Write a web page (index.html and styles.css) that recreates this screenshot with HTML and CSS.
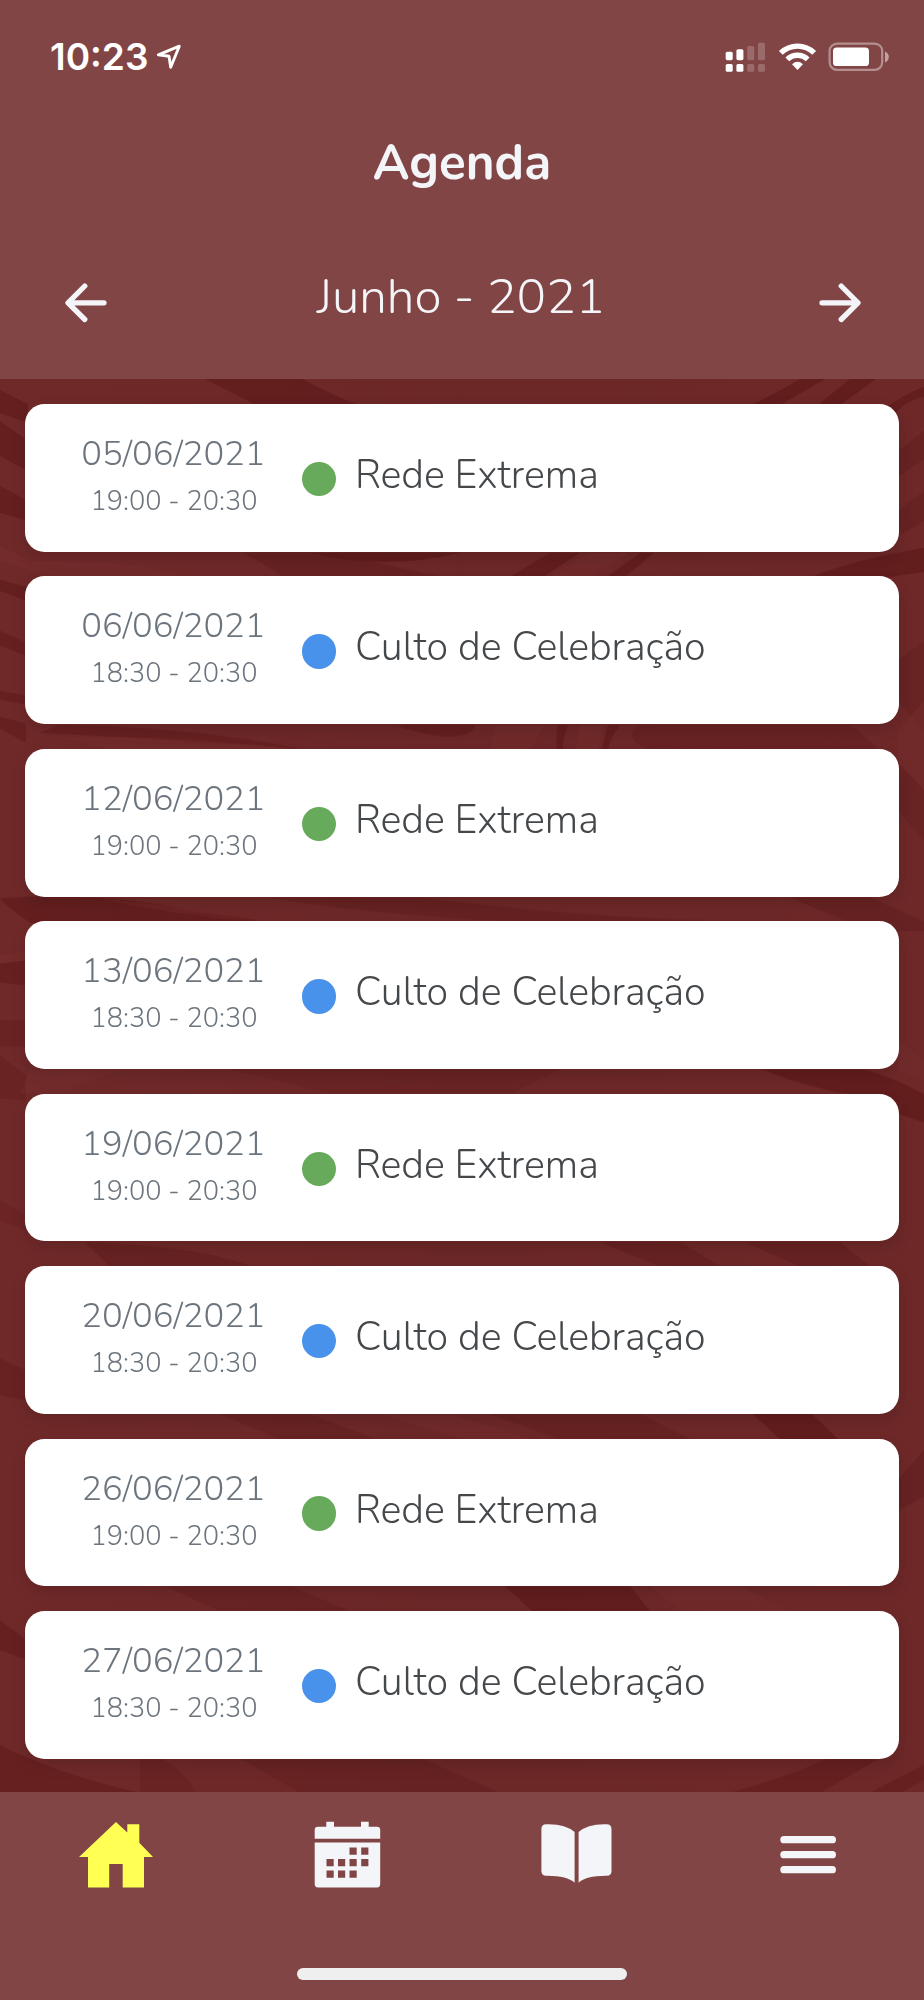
FILE: index.html
```html
<!DOCTYPE html>
<html lang="pt-BR">
<head>
<meta charset="utf-8">
<title>Agenda</title>
<link rel="stylesheet" href="styles.css">
</head>
<body>
<div class="app">
  <header class="header">
    <div class="status">
      <span class="clock">10:23</span>
      <svg class="location" width="28" height="28" viewBox="155 43 28 28"><path d="M158.300 54.800L179.300 46.200L170.700 67.200L169 56.300Z" fill="none" stroke="#fff" stroke-width="2.900" stroke-linejoin="round"/></svg>
      <svg class="indicators" width="166" height="32" viewBox="724 41 166 32">
        <g fill="#fff">
          <rect x="725.700" y="51.700" width="7" height="8.500" rx="1.600"/><rect x="736.400" y="49.200" width="7" height="11" rx="1.600"/>
          <rect x="725.700" y="64" width="7" height="7.800" rx="1.600"/><rect x="736.400" y="64" width="7" height="7.800" rx="1.600"/>
        </g>
        <g fill="#fff" opacity=".2">
          <rect x="747.200" y="46" width="7" height="14.200" rx="1.600"/><rect x="758" y="42.700" width="7" height="17.500" rx="1.600"/>
          <rect x="747.200" y="64" width="7" height="7.800" rx="1.600"/><rect x="758" y="64" width="7" height="7.800" rx="1.600"/>
        </g>
        <g fill="none" stroke="#fff" stroke-width="5.400">
          <path d="M780.800 52.900A24 24 0 0 1 814.200 52.900"/>
          <path d="M787.300 59.400A14.600 14.600 0 0 1 807.700 59.400"/>
        </g>
        <path d="M792 64.300Q797.500 59.400 803 64.300L797.500 70Z" fill="#fff"/>
        <rect x="829.600" y="43.600" width="52.600" height="26.200" rx="7.500" fill="none" stroke="#fff" stroke-opacity=".4" stroke-width="2.200"/>
        <rect x="833" y="47.600" width="36" height="18.400" rx="3.600" fill="#fff"/>
        <path d="M885 51.600Q888.800 53.200 888.800 57T885 62.400Z" fill="#fff" fill-opacity=".5"/>
      </svg>
    </div>
    <h1 class="title">Agenda</h1>
    <div class="month">
      <svg class="arrow" width="46" height="44" viewBox="63 281 46 44"><path d="M104 302.800H68.500M84.800 286L68 302.800L84.800 319.500"/></svg>
      <span class="month-name">Junho - 2021</span>
      <svg class="arrow" width="46" height="44" viewBox="817 281 46 44"><path d="M822 302.800H857.500M841.200 286L858 302.800L841.200 319.500"/></svg>
    </div>
  </header>

  <main class="list">
    <svg class="swirl" viewBox="0 378 924 1415" preserveAspectRatio="none">
      <defs>
        <linearGradient id="side" x1="0" x2="1"><stop offset="0" stop-color="#702929"/><stop offset=".5" stop-color="#6c2727"/><stop offset="1" stop-color="#6e2828"/></linearGradient>
      </defs>
      <rect y="378" width="924" height="1415" fill="url(#side)"/>
      <g fill="#5c1818" opacity=".75">
        <path opacity=".8" d="M205 378H302Q380 420 460 430H300Q260 405 205 378Z"/>
        <path opacity=".7" d="M0 389L28 403V422L0 412ZM0 420L28 440V470L0 455ZM0 485L28 500V520L0 512Z"/>
        <path d="M800 378H825L780 404H752Q780 390 800 378ZM850 378H876L840 404H818Z" opacity=".9"/>
        <path opacity=".8" d="M924 386Q900 395 885 408L895 412Q908 398 924 396Z"/>
        <path opacity=".45" d="M924 430L898 450V476L924 458ZM924 490L898 510V535L924 520Z"/>
        <path opacity=".5" d="M245 552H330L460 580H290Z"/>
        <path opacity=".85" d="M310 552H460Q385 570 310 552Z"/>
        <path opacity=".8" d="M550 552H580L543 576H510ZM640 552H654L625 576H607Z"/>
        <path opacity=".85" d="M924 547Q850 560 812 576H890L924 571Z"/>
        <path opacity=".75" d="M0 579L26 586V600L0 590Z"/>
        <path opacity=".6" d="M0 630L26 642V655L0 645ZM0 690L26 695V704L0 699ZM0 716L26 723V742L0 728Z"/>
        <path opacity=".6" d="M60 724Q190 726 300 748Q160 738 40 732ZM395 724H476Q470 737 446 736Q422 734 395 724Z"/>
        <path opacity=".75" d="M558 724H568Q562 738 563 749H557Q555 738 558 724ZM608 724H620Q610 738 608 749H602Z"/>
        <path opacity=".4" d="M640 724H850L880 749H650Q620 738 640 724Z"/>
        <path opacity=".4" d="M924 640L898 660V730L924 700ZM924 790Q908 770 898 765V810L924 840Z"/>
        <path opacity=".8" d="M0 898Q100 890 190 910L270 922H30Q5 905 0 898Z"/>
        <path opacity=".5" d="M270 897H420Q600 920 760 921H520Q380 915 270 897ZM790 897H870L924 921V930H870Z"/>
        <path opacity=".6" d="M0 963L26 960V985L0 982Z"/>
        <path opacity=".4" d="M0 1020H26V1046H0ZM0 1055L26 1075V1100L0 1098Z"/>
        <path opacity=".9" d="M763 1069H865Q900 1080 924 1094V1122L895 1112L850 1094Q800 1085 763 1069Z"/>
        <path opacity=".3" d="M230 1069H560L510 1093H330ZM0 1200L26 1215V1230L0 1220Z"/>
        <path opacity=".5" d="M85 1242Q200 1246 250 1266H110ZM600 1242H680L720 1266H660ZM745 1242H840L870 1266H800Z"/>
        <path opacity=".5" d="M0 1358L25 1370V1400L0 1395Z"/>
        <path opacity=".4" d="M220 1414H310L375 1439H280ZM490 1414H640L690 1439H560Z"/>
        <path opacity=".9" d="M753 1414H812L838 1439H780Z"/>
        <path opacity=".5" d="M924 1450L898 1480V1510L924 1496Z"/>
        <path opacity=".4" d="M165 1586H290L350 1611H220Z"/>
        <path opacity=".8" d="M505 1586H630L650 1611H532Z"/>
        <path opacity=".6" d="M0 1620L26 1640V1660L0 1650ZM0 1745Q60 1775 140 1793H0Z"/>
        <path opacity=".4" d="M140 1758H160Q190 1775 195 1793H140ZM240 1758H420L500 1793H300Z"/>
        <path opacity=".6" d="M830 1758H880L820 1793H730Q780 1780 830 1758ZM924 1765L870 1793H900L924 1780Z"/>
      </g>
      <g fill="#7a3232" opacity=".3">
        <path d="M0 545L30 560Q150 560 190 578H90Q40 575 0 560ZM590 552H630L590 576H550Z"/>
        <path d="M495 724H545L530 749H490ZM580 724H604L598 749H575ZM60 736Q200 735 300 749H110Z"/>
        <path d="M100 898Q180 905 250 920L220 918Q140 908 100 898ZM0 955L26 950V960L0 963Z"/>
        <path d="M30 1069H120L60 1093H20ZM898 1040L924 1060V1080L898 1070Z"/>
        <path d="M380 1414H450L530 1439H460ZM650 1586H740L790 1611H680Z"/>
        <path d="M898 700L924 730V790L898 760Z"/>
      </g>
    </svg>
    <article class="card"><div class="when"><span class="date">05/06/2021</span><span class="time">19:00 - 20:30</span></div><i class="dot green"></i><span class="name">Rede Extrema</span></article>
    <article class="card"><div class="when"><span class="date">06/06/2021</span><span class="time">18:30 - 20:30</span></div><i class="dot blue"></i><span class="name">Culto de Celebração</span></article>
    <article class="card"><div class="when"><span class="date">12/06/2021</span><span class="time">19:00 - 20:30</span></div><i class="dot green"></i><span class="name">Rede Extrema</span></article>
    <article class="card"><div class="when"><span class="date">13/06/2021</span><span class="time">18:30 - 20:30</span></div><i class="dot blue"></i><span class="name">Culto de Celebração</span></article>
    <article class="card"><div class="when"><span class="date">19/06/2021</span><span class="time">19:00 - 20:30</span></div><i class="dot green"></i><span class="name">Rede Extrema</span></article>
    <article class="card"><div class="when"><span class="date">20/06/2021</span><span class="time">18:30 - 20:30</span></div><i class="dot blue"></i><span class="name">Culto de Celebração</span></article>
    <article class="card"><div class="when"><span class="date">26/06/2021</span><span class="time">19:00 - 20:30</span></div><i class="dot green"></i><span class="name">Rede Extrema</span></article>
    <article class="card"><div class="when"><span class="date">27/06/2021</span><span class="time">18:30 - 20:30</span></div><i class="dot blue"></i><span class="name">Culto de Celebração</span></article>
  </main>

  <footer class="footer">
    <nav class="tabs">
      <svg width="76" height="70" viewBox="78 1820 76 70"><path fill="#ffff54" d="M79 1857L116 1822L127.300 1832.500V1824.300H139.300V1842.700L153 1857H144V1887.400H122.700V1864H109.200V1887.400H88V1857Z"/></svg>
      <svg width="76" height="70" viewBox="309 1820 76 70" fill="#f4f5f8">
        <path d="M314.700 1838.800V1830Q314.700 1826.700 318 1826.700H326.300V1821.700H334V1826.700H361V1821.700H368.700V1826.700H377Q380.200 1826.700 380.200 1830V1838.800Z"/>
        <path fill-rule="evenodd" d="M314.700 1842.500H380.200V1884Q380.200 1887.400 377 1887.400H318Q314.700 1887.400 314.700 1884ZM349.500 1847.500V1854.700H356.700V1847.500ZM361.200 1847.500V1854.700H368.400V1847.500ZM326.500 1859V1866.200H333.700V1859ZM338 1859V1866.200H345.200V1859ZM349.500 1859V1866.200H356.700V1859ZM361.200 1859V1866.200H368.400V1859ZM326.500 1870.500V1877.700H333.700V1870.500ZM338 1870.500V1877.700H345.200V1870.500ZM349.500 1870.500V1877.700H356.700V1870.500Z"/>
      </svg>
      <svg width="76" height="70" viewBox="540 1820 76 70" fill="#f4f5f8">
        <path d="M541.400 1829Q541.400 1824.200 546.200 1824.200Q565 1823.500 574.600 1832V1882.700Q567 1875.500 546.200 1875.700Q541.400 1875.500 541.400 1870.900Z"/>
        <path d="M611.500 1829Q611.500 1824.200 606.700 1824.200Q588 1823.500 578.600 1832V1882.700Q586 1875.500 606.700 1875.700Q611.500 1875.500 611.500 1870.900Z"/>
      </svg>
      <svg width="76" height="70" viewBox="771 1820 76 70" fill="#f4f5f8"><rect x="780.300" y="1836" width="55.700" height="7.300" rx="3.650"/><rect x="780.300" y="1851" width="55.700" height="7.300" rx="3.650"/><rect x="780.300" y="1866" width="55.700" height="7.300" rx="3.650"/></svg>
    </nav>
    <div class="home-bar"></div>
  </footer>
</div>
</body>
</html>
```

FILE: styles.css
```css
* { box-sizing: border-box; }
body { margin: 0; }
svg { display: block; flex: none; }
.app {
  width: 924px;
  height: 2000px;
  display: flex;
  flex-direction: column;
  overflow: hidden;
  font-family: Nunito, Lato, "Open Sans", sans-serif;
  font-weight: 300;
  background: #6c2626;
}
.header { height: 378.700px; background: #824545; color: #f4f5f8; flex: none; }
.status { display: flex; height: 114px; padding: 0 34px 0 50px; }
.clock {
  width: 105px;
  padding-top: 34px;
  font: 600 37px/46px Inter, sans-serif;
  color: #fff;
}
.location { margin-top: 43px; }
.indicators { margin: 41px 0 0 auto; }
.title { margin: 0; height: 100px; text-align: center; font-size: 49.300px; line-height: 98px; font-weight: 700; }
.month { display: flex; justify-content: space-between; align-items: flex-start; padding: 49px 61px 0 63px; }
.arrow { margin-top: 18px; fill: none; stroke: #f4f5f8; stroke-width: 5.300; stroke-linecap: round; stroke-linejoin: round; }
.month-name { font-size: 49.300px; line-height: 67px; margin-right: 4px; }
.list {
  position: relative;
  flex: none;
  height: 1413.800px;
  display: flex;
  flex-direction: column;
  gap: 24.700px;
  padding: 25.300px 24.700px 0;
}
.swirl { position: absolute; inset: 0; width: 100%; height: 100%; }
.card {
  position: relative;
  flex: none;
  height: 147.750px;
  border-radius: 19.700px;
  background: #fff;
  box-shadow: 0 6px 16px rgba(0, 0, 0, .12);
  display: flex;
  align-items: flex-start;
}
.when { width: 296px; display: flex; flex-direction: column; align-items: center; padding-top: 26px; color: #6c757d; }
.date { font-size: 34.500px; line-height: 48px; padding-left: 1.500px; }
.time { font-size: 27.100px; line-height: 47px; padding-left: 2.500px; }
.dot { width: 34.500px; height: 34.500px; border-radius: 50%; margin: 57.800px 18.500px 0 -18.800px; flex: none; }
.green { background: #68aa5c; }
.blue { background: #4992eb; }
.name { padding-top: 44px; font-size: 39.400px; line-height: 54px; color: #45484b; }
.footer { flex: 1; background: #824545; }
.tabs { display: grid; grid-template-columns: repeat(4, 1fr); justify-items: center; padding-top: 27.500px; height: 175.200px; }
.home-bar { width: 330.200px; height: 12.600px; margin: 0 auto; border-radius: 7px; background: #efefef; }
```
